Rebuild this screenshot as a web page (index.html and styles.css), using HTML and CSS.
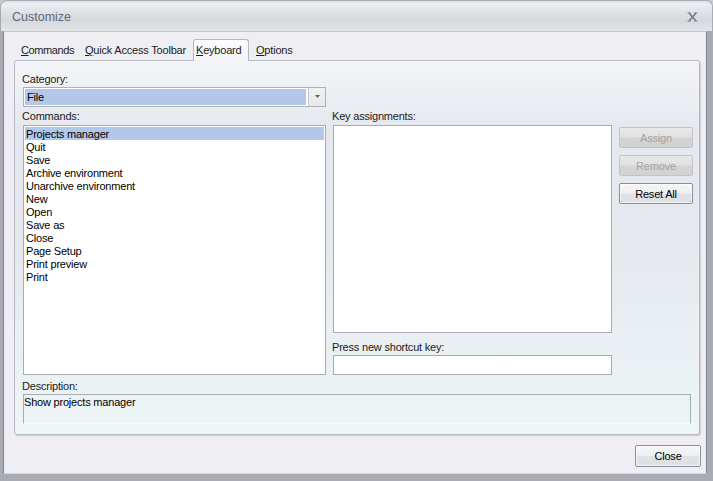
FILE: index.html
```html
<!DOCTYPE html>
<html lang="en">
<head>
    <meta charset="UTF-8">
    <title>Customize</title>
    <link rel="stylesheet" href="styles.css">
</head>
<body>
    <div class="window">
        <div class="titlebar">
            <span class="title">Customize</span>
            <svg class="close-x" width="11" height="10" viewBox="0 0 11 10">
                <path d="M2 1 L9 9 M9 1 L2 9" stroke="#737b8c" stroke-width="1.7" fill="none"/>
                <path d="M0.5 1 H4 M7 1 H10.5 M0.5 9 H4 M7 9 H10.5" stroke="#808797" stroke-width="1" fill="none"/>
            </svg>
        </div>
        <div class="frame">
            <div class="client">
                <div class="tabs">
                    <div class="tab tab-commands"><u>C</u>ommands</div>
                    <div class="tab tab-quick"><u>Q</u>uick Access Toolbar</div>
                    <div class="tab tab-keyboard selected"><u>K</u>eyboard</div>
                    <div class="tab tab-options"><u>O</u>ptions</div>
                </div>
                <div class="panel">
                    <div class="label">Category:</div>
                    <div class="combo">
                        <div class="combo-value">File</div>
                        <div class="combo-btn">
                            <svg width="5" height="3" viewBox="0 0 5 3"><polygon points="0,0 5,0 2.5,3" fill="#5c5f66"/></svg>
                        </div>
                    </div>
                    <div class="main">
                        <div class="col-commands">
                            <div class="label">Commands:</div>
                            <div class="listbox commands-list">
                                <div class="item active">Projects manager</div>
                                <div class="item">Quit</div>
                                <div class="item">Save</div>
                                <div class="item">Archive environment</div>
                                <div class="item">Unarchive environment</div>
                                <div class="item">New</div>
                                <div class="item">Open</div>
                                <div class="item">Save as</div>
                                <div class="item">Close</div>
                                <div class="item">Page Setup</div>
                                <div class="item">Print preview</div>
                                <div class="item">Print</div>
                            </div>
                        </div>
                        <div class="col-keys">
                            <div class="label">Key assignments:</div>
                            <div class="listbox keys-list"></div>
                            <div class="label press-label">Press new shortcut key:</div>
                            <div class="textbox"></div>
                        </div>
                        <div class="col-buttons">
                            <button class="btn" disabled>Assign</button>
                            <button class="btn" disabled>Remove</button>
                            <button class="btn">Reset All</button>
                        </div>
                    </div>
                    <div class="label desc-label">Description:</div>
                    <div class="description">Show projects manager</div>
                </div>
                <div class="footer">
                    <button class="btn close-btn">Close</button>
                </div>
            </div>
        </div>
    </div>
</body>
</html>
```

FILE: styles.css
```css
body {
    margin: 0;
    width: 713px;
    height: 481px;
    overflow: hidden;
    background-color: #c9ccd0;
    font-family: "Liberation Sans", Arial, sans-serif;
    font-size: 11px;
    letter-spacing: -0.2px;
    color: #000;
}

.window {
    width: 713px;
    height: 481px;
    box-sizing: border-box;
    display: flex;
    flex-direction: column;
    padding: 1px 1px 0 1px;
    background-color: #a8acb2;
    border-radius: 7px 7px 0 0;
}

.titlebar {
    height: 30px;
    box-sizing: border-box;
    display: flex;
    justify-content: space-between;
    align-items: flex-start;
    padding: 9px 14px 0 11px;
    border-radius: 6px 6px 0 0;
    background: linear-gradient(180deg, #dfe1e5 0%, #eceef1 12%, #dcdfe3 45%, #d5d8dd 65%, #e3e5e9 100%);
}

.title {
    font-size: 12.5px;
    line-height: 15px;
    letter-spacing: 0;
    color: #5f6677;
}

.close-x {
    margin-top: 2px;
}

.frame {
    flex: 1;
    display: flex;
    padding: 0 5px 7px 2px;
}

.client {
    flex: 1;
    display: flex;
    flex-direction: column;
    padding: 7px 6px 0 10px;
    background-color: #eeeef3;
    border: 1px solid #7f848c;
    border-top-color: #c4c7cd;
    border-bottom-color: #d7d8dc;
}

.tabs {
    display: flex;
    height: 21px;
    align-items: flex-start;
}

.tab {
    box-sizing: border-box;
    height: 21px;
    padding: 1px 0 0 7px;
    line-height: 20px;
    white-space: nowrap;
    color: #1b1b1b;
}

.tab u {
    text-decoration-thickness: 1px;
    text-underline-offset: 1px;
}

.tab-commands { width: 64px; letter-spacing: -0.4px; }
.tab-quick { width: 115px; }
.tab-options { width: 50px; }

.tab-keyboard {
    width: 56px;
    height: 22px;
    padding-left: 2px;
    position: relative;
    z-index: 1;
    border: 1px solid #b3b7bf;
    border-bottom: none;
    border-radius: 3px 3px 0 0;
    background: linear-gradient(180deg, #fcfcfd 0%, #f3f4f7 100%);
    line-height: 19px;
}

.panel {
    height: 375px;
    box-sizing: border-box;
    display: flex;
    flex-direction: column;
    padding: 11px 6px 10px 8px;
    border: 1px solid #b5b9c1;
    border-radius: 3px;
    box-shadow: 1px 1px 1px rgba(0, 0, 0, 0.14);
    background: linear-gradient(180deg, #f4f5f8 0%, #e5e8ee 18%, #e5e9ee 50%, #e9eff2 75%, #eef6f8 100%);
}

.label {
    line-height: 14px;
    height: 13px;
    margin-left: -1px;
    color: #1b1b1b;
    white-space: nowrap;
}

.combo {
    width: 303px;
    height: 20px;
    box-sizing: border-box;
    margin-top: 2px;
    display: flex;
    padding: 1px;
    background-color: #fff;
    border: 1px solid #abafb6;
}

.combo-value {
    flex: 1;
    padding: 1px 0 0 2px;
    line-height: 15px;
    background-color: #b3c8e8;
}

.combo-btn {
    width: 16px;
    margin: -1px -1px -1px 2px;
    display: flex;
    align-items: center;
    justify-content: center;
    border-left: 1px solid #c6c9ce;
    background: linear-gradient(180deg, #f1f2f4 0%, #e6e8eb 100%);
}

.combo-btn svg {
    margin-top: -1px;
}

.main {
    display: flex;
    gap: 7px;
    margin-top: 2px;
}

.col-commands {
    width: 303px;
}

.col-keys {
    width: 279px;
}

.col-buttons {
    width: 74px;
    display: flex;
    flex-direction: column;
    gap: 7px;
    padding-top: 18px;
}

.listbox {
    box-sizing: border-box;
    margin-top: 3px;
    padding: 1px;
    background-color: #fff;
    border: 1px solid #a6aab2;
}

.commands-list {
    height: 250px;
}

.keys-list {
    height: 208px;
}

.item {
    height: 13px;
    line-height: 15px;
    padding-left: 1px;
    white-space: nowrap;
}

.item.active {
    background-color: #b3c8e8;
}

.press-label {
    margin-top: 7px;
}

.textbox {
    height: 20px;
    box-sizing: border-box;
    margin-top: 2px;
    background-color: #fff;
    border: 1px solid #a6aab2;
}

.btn {
    height: 21px;
    box-sizing: border-box;
    padding: 0;
    font-family: "Liberation Sans", Arial, sans-serif;
    font-size: 11px;
    letter-spacing: -0.2px;
    color: #000;
    border: 1px solid #8b9098;
    border-radius: 2px;
    background: linear-gradient(180deg, #f6f6f7 0%, #eceef0 48%, #dfe2e6 52%, #dcdfe3 100%);
    box-shadow: inset 0 0 0 1px rgba(255, 255, 255, 0.6);
}

.btn:disabled {
    color: #a4a4a4;
    border-color: #c3c4c6;
    background: linear-gradient(180deg, #e8e8e8 0%, #e1e1e1 48%, #d4d4d4 52%, #d2d2d2 100%);
    box-shadow: none;
}

.desc-label {
    margin-top: 4px;
}

.description {
    height: 30px;
    box-sizing: border-box;
    margin-top: 2px;
    margin-right: 2px;
    padding: 1px 0 0 0;
    line-height: 13px;
    border: 1px solid #a7abb2;
    border-bottom-color: #f9fcfd;
}

.footer {
    display: flex;
    justify-content: flex-end;
    margin-top: 10px;
    margin-right: -1px;
}

.close-btn {
    width: 66px;
    height: 22px;
}
```
